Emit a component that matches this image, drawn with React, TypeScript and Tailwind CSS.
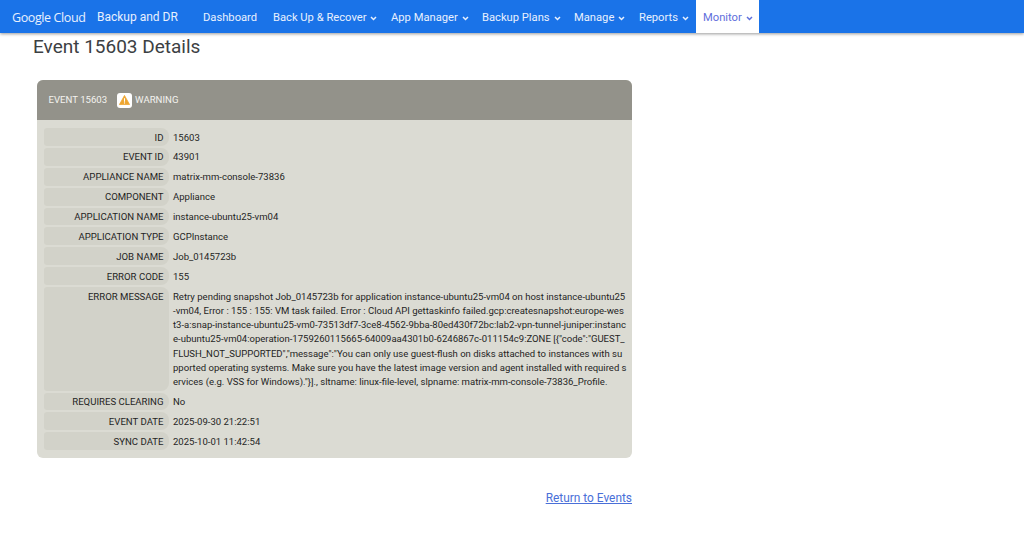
import React from "react";

const Chevron = () => (
  <svg viewBox="0 0 8 6" className="w-[7px] h-[5px] ml-[4px] mt-[2px]" fill="none" stroke="currentColor" strokeWidth="1.8">
    <path d="M1 1.2 L4 4.2 L7 1.2" />
  </svg>
);

const messageLines = [
  "Retry pending snapshot Job_0145723b for application instance-ubuntu25-vm04 on host instance-ubuntu25",
  "-vm04, Error : 155 : 155: VM task failed. Error : Cloud API gettaskinfo failed.gcp:createsnapshot:europe-wes",
  "t3-a:snap-instance-ubuntu25-vm0-73513df7-3ce8-4562-9bba-80ed430f72bc:lab2-vpn-tunnel-juniper:instanc",
  'e-ubuntu25-vm04:operation-1759260115665-64009aa4301b0-6246867c-011154c9:ZONE [{"code":"GUEST_',
  'FLUSH_NOT_SUPPORTED","message":"You can only use guest-flush on disks attached to instances with su',
  "pported operating systems. Make sure you have the latest image version and agent installed with required s",
  'ervices (e.g. VSS for Windows)."}]., sltname: linux-file-level, slpname: matrix-mm-console-73836_Profile.',
];

const rows: [string, React.ReactNode][] = [
  ["ID", "15603"],
  ["EVENT ID", "43901"],
  ["APPLIANCE NAME", "matrix-mm-console-73836"],
  ["COMPONENT", "Appliance"],
  ["APPLICATION NAME", "instance-ubuntu25-vm04"],
  ["APPLICATION TYPE", "GCPInstance"],
  ["JOB NAME", "Job_0145723b"],
  ["ERROR CODE", "155"],
  ["ERROR MESSAGE", messageLines.map((l) => <div key={l}>{l}</div>)],
  ["REQUIRES CLEARING", "No"],
  ["EVENT DATE", "2025-09-30 21:22:51"],
  ["SYNC DATE", "2025-10-01 11:42:54"],
];

export default function App() {
  return (
    <div className="min-h-[543px] bg-white font-['Roboto',sans-serif] text-[#212529]">
      <nav className="h-[33px] bg-[#1a73e8] flex items-stretch text-white shadow-[0_1px_3px_rgba(0,0,0,0.4)] pl-[12px] leading-[35px]">
        <span className="text-[12.5px] font-['Open_Sans',sans-serif] tracking-[-0.4px] w-[85px] text-[#e8f0fe]">Google Cloud</span>
        <span className="text-[12px] w-[106px] text-[#e8f0fe]">Backup and DR</span>
        <div className="flex text-[11.2px] text-[#e8f0fe]">
          <span className="w-[70px]">Dashboard</span>
          <span className="w-[118px] flex items-center pt-[2px]">Back Up &amp; Recover<Chevron /></span>
          <span className="w-[91px] flex items-center pt-[2px]">App Manager<Chevron /></span>
          <span className="w-[92px] flex items-center pt-[2px]">Backup Plans<Chevron /></span>
          <span className="w-[65px] flex items-center pt-[2px]">Manage<Chevron /></span>
          <span className="w-[57px] flex items-center pt-[2px]">Reports<Chevron /></span>
          <span className="w-[63px] flex items-center pt-[2px] bg-white text-[#5f6fdc] pl-[7px]">Monitor<Chevron /></span>
        </div>
      </nav>
      <main className="pl-[33px] w-[632px]">
        <h1 className="text-[19px] leading-[28px] text-[#3c4043]">Event 15603 Details</h1>
        <section className="mt-[19px] ml-[3.5px] rounded-[6px] overflow-hidden bg-[#dbdbd3]">
          <header className="h-[40px] bg-[#93928a] flex items-center pl-[12px] text-[9.6px] text-[#f3f3ef]">
            <span>EVENT 15603</span>
            <span className="ml-[10px] w-[15px] h-[15px] bg-white rounded-[3px] flex items-center justify-center">
              <svg viewBox="0 0 14 13" className="w-[11px] h-[10px]">
                <path d="M7 0.6 L13.6 12.4 L0.4 12.4 Z" fill="#eea631" stroke="#eea631" strokeLinejoin="round" />
                <rect x="6.3" y="4.2" width="1.4" height="4.6" fill="#fff" />
                <rect x="6.3" y="9.6" width="1.4" height="1.5" fill="#fff" />
              </svg>
            </span>
            <span className="ml-[3px]">WARNING</span>
          </header>
          <div className="pt-[8px] pb-[8px] px-[7px] flex flex-col gap-[2px] text-[9.6px] leading-[14.28px] text-[#1f1f1f]">
            {rows.map(([label, value]) => (
              <div key={label} className="flex">
                <div className="w-[125px] shrink-0 bg-[#d2d2c9] rounded-l-[3px] rounded-r-[8px] text-right pr-[5px] pt-[2.6px] pb-[1px]">{label}</div>
                <div className="ml-[4.5px] pt-[2.6px] pb-[1px] whitespace-nowrap text-[9.54px]">{value}</div>
              </div>
            ))}
          </div>
        </section>
        <div className="mt-[27px] text-right">
          <a className="text-[11.9px] leading-[16px] text-[#4a6fd8] underline">Return to Events</a>
        </div>
      </main>
    </div>
  );
}
